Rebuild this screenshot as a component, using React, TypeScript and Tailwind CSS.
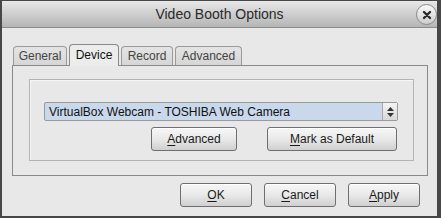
import React from 'react';

const font = { fontFamily: '"Liberation Sans", Arial, sans-serif' };

const Btn: React.FC<{ label: string; mnemonic: number; className?: string }> = ({ label, mnemonic, className }) => (
  <button
    className={`h-[24px] rounded-[3px] border border-[#6f6f6f] bg-gradient-to-b from-[#f7f7f7] via-[#e9e9e9] to-[#cfcfcf] text-[12px] text-[#1a1a1a] shadow-[inset_0_1px_0_#ffffff] ${className ?? ''}`}
  >
    {label.slice(0, mnemonic)}
    <span className="underline underline-offset-2">{label[mnemonic]}</span>
    {label.slice(mnemonic + 1)}
  </button>
);

const tabs = [
  { name: 'General', w: 'w-[54px]' },
  { name: 'Device', w: 'w-[50px]' },
  { name: 'Record', w: 'w-[52px]' },
  { name: 'Advanced', w: 'w-[67px]' },
];

export default function App() {
  return (
    <div
      style={font}
      className="flex h-[218px] w-[441px] flex-col border-x-2 border-b-2 border-t border-[#474747] border-r-4 bg-[#474747]"
    >
      {/* title bar */}
      <div className="relative flex h-[27px] shrink-0 items-center justify-center bg-gradient-to-b from-[#e8e8e8] to-[#b5b5b5] border-b border-[#8c8c8c]">
        <span className="text-[14px] text-[#2a2a2a]">Video Booth Options</span>
        <div className="absolute right-[0px] top-[3px] flex h-[21px] w-[21px] items-center justify-center rounded-full border border-[#8a8a8a] bg-gradient-to-b from-[#fafafa] to-[#cdcdcd]">
          <svg width="10" height="10" viewBox="0 0 10 10">
            <path d="M2 2 L8 8 M8 2 L2 8" stroke="#2b2b2b" strokeWidth="2.4" strokeLinecap="round" />
          </svg>
        </div>
      </div>

      {/* body */}
      <div className="flex flex-1 flex-col bg-[#e8e8e8] pl-[10px] pr-[9px] pt-[16px]">
        <div className="flex items-end gap-[2px] pl-[1px]">
          {tabs.map((t) =>
            t.name === 'Device' ? (
              <div
                key={t.name}
                className={`relative z-10 -mb-px flex h-[22px] ${t.w} items-center justify-center rounded-t-[4px] border border-b-0 border-[#8a8a8a] bg-[#ececec] pb-[2px] text-[12px] text-[#111]`}
              >
                {t.name}
              </div>
            ) : (
              <div
                key={t.name}
                className={`flex h-[19px] ${t.w} items-center justify-center rounded-t-[4px] border border-b-0 border-[#9a9a9a] bg-gradient-to-b from-[#e4e4e4] to-[#d6d6d6] text-[12px] text-[#444]`}
              >
                {t.name}
              </div>
            )
          )}
        </div>

        <div className="h-[111px] border border-[#8a8a8a] bg-[#e8e8e8] pl-[16px] pr-[13px] pt-[13px]">
          <div className="h-[82px] border border-[#b4b4b4] pl-[14px] pr-[15px] pt-[22px] shadow-[inset_1px_1px_0_#f6f6f6]">
            <div className="flex h-[19px] items-stretch rounded-[2px] border border-[#9a9a9a] bg-[#c9d8ea]">
              <div className="flex flex-1 items-center pl-[4px] text-[12px] text-[#111]">
                VirtualBox Webcam - TOSHIBA Web Camera
              </div>
              <div className="flex w-[15px] flex-col items-center justify-center gap-[2px] border-l border-[#a8a8a8] bg-gradient-to-b from-[#f4f4f4] to-[#d8d8d8]">
                <svg width="7" height="4" viewBox="0 0 7 4"><path d="M0 4 L3.5 0 L7 4 Z" fill="#333" /></svg>
                <svg width="7" height="4" viewBox="0 0 7 4"><path d="M0 0 L3.5 4 L7 0 Z" fill="#333" /></svg>
              </div>
            </div>
            <div className="mt-[6px] flex justify-end gap-[30px] pr-[1px]">
              <Btn label="Advanced" mnemonic={0} className="w-[86px]" />
              <Btn label="Mark as Default" mnemonic={0} className="w-[130px]" />
            </div>
          </div>
        </div>

        <div className="mt-[7px] flex justify-end gap-[12px] pr-[8px]">
          <Btn label="OK" mnemonic={0} className="w-[72px]" />
          <Btn label="Cancel" mnemonic={0} className="w-[72px]" />
          <Btn label="Apply" mnemonic={0} className="w-[72px]" />
        </div>
      </div>
    </div>
  );
}
